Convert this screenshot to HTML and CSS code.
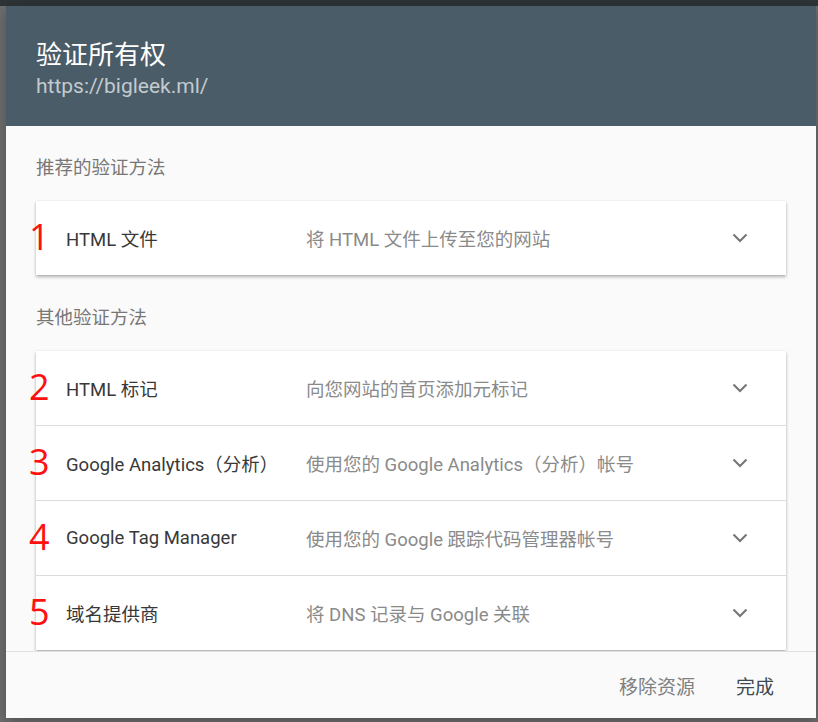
FILE: index.html
```html
<!DOCTYPE html>
<html lang="zh-CN">
<head>
<meta charset="utf-8">
<title>验证所有权</title>
<link rel="stylesheet" href="styles.css">
</head>
<body>
<div class="dialog">
  <header class="dialog-header">
    <h1 class="title">验证所有权</h1>
    <div class="url">https://bigleek.ml/</div>
  </header>
  <main class="dialog-body">
    <div class="section-label">推荐的验证方法</div>
    <div class="card">
      <div class="row">
        <span class="mark">1</span>
        <span class="name">HTML 文件</span>
        <span class="desc">将 HTML 文件上传至您的网站</span>
        <svg class="chev" width="16" height="10" viewBox="0 0 16 10"><path d="M1.5 1.5 L8 8 L14.5 1.5" fill="none" stroke="#757575" stroke-width="2"/></svg>
      </div>
    </div>
    <div class="section-label second">其他验证方法</div>
    <div class="card">
      <div class="row">
        <span class="mark">2</span>
        <span class="name">HTML 标记</span>
        <span class="desc">向您网站的首页添加元标记</span>
        <svg class="chev" width="16" height="10" viewBox="0 0 16 10"><path d="M1.5 1.5 L8 8 L14.5 1.5" fill="none" stroke="#757575" stroke-width="2"/></svg>
      </div>
      <div class="row">
        <span class="mark">3</span>
        <span class="name">Google Analytics（分析）</span>
        <span class="desc">使用您的 Google Analytics（分析）帐号</span>
        <svg class="chev" width="16" height="10" viewBox="0 0 16 10"><path d="M1.5 1.5 L8 8 L14.5 1.5" fill="none" stroke="#757575" stroke-width="2"/></svg>
      </div>
      <div class="row">
        <span class="mark">4</span>
        <span class="name">Google Tag Manager</span>
        <span class="desc">使用您的 Google 跟踪代码管理器帐号</span>
        <svg class="chev" width="16" height="10" viewBox="0 0 16 10"><path d="M1.5 1.5 L8 8 L14.5 1.5" fill="none" stroke="#757575" stroke-width="2"/></svg>
      </div>
      <div class="row">
        <span class="mark">5</span>
        <span class="name">域名提供商</span>
        <span class="desc">将 DNS 记录与 Google 关联</span>
        <svg class="chev" width="16" height="10" viewBox="0 0 16 10"><path d="M1.5 1.5 L8 8 L14.5 1.5" fill="none" stroke="#757575" stroke-width="2"/></svg>
      </div>
    </div>
  </main>
  <footer class="dialog-footer">
    <button class="btn btn-secondary">移除资源</button>
    <button class="btn btn-primary">完成</button>
  </footer>
</div>
</body>
</html>
```

FILE: styles.css
```css
* { box-sizing: border-box; }
html, body { height: 100%; }
body {
  margin: 0;
  background: linear-gradient(#2f3437 0, #2f3437 6px, #6f6f6f 6px, #6f6f6f 100%);
  font-family: Roboto, "Noto Sans CJK SC", sans-serif;
  overflow: hidden;
}
.dialog {
  margin: 6px 0 0 6px;
  width: 810px;
  height: 712px;
  background: #fafafa;
  display: flex;
  flex-direction: column;
  box-shadow: 0 4px 16px rgba(0,0,0,0.3);
}
.dialog-header {
  background: #4a5c67;
  height: 120px;
  flex: none;
  padding: 32px 30px 0 30px;
}
.title {
  margin: 0;
  font-weight: 400;
  font-size: 26px;
  line-height: 34px;
  color: #ffffff;
}
.url {
  font-size: 21px;
  line-height: 26px;
  color: #c2cbd0;
  margin-top: 1px;
}
.dialog-body {
  flex: 1;
  overflow: hidden;
  padding: 32px 30px 0 30px;
}
.section-label {
  font-size: 18.5px;
  line-height: 20px;
  color: #777777;
  margin-bottom: 23px;
}
.section-label.second { margin-top: 33px; }
.card {
  background: #fff;
  box-shadow: 0 2px 3px rgba(0,0,0,0.28), 0 0 2px rgba(0,0,0,0.08);
}
.row {
  position: relative;
  display: flex;
  align-items: center;
  height: 75px;
  padding: 0 38px 0 30px;
  border-bottom: 1px solid #dcdcdc;
  font-size: 18.5px;
}
.row:last-child { border-bottom: none; height: 74px; }
.mark {
  position: absolute;
  left: -7px;
  top: 50%;
  transform: translateY(-52%);
  font-family: "Open Sans", "Liberation Sans", sans-serif;
  font-size: 36px;
  line-height: 1;
  color: #ff1010;
}
.name {
  width: 240px;
  flex: none;
  color: #383838;
}
.desc {
  flex: 1;
  color: #8a8a8a;
}
.chev { flex: none; }
.dialog-footer {
  flex: none;
  height: 67px;
  border-top: 1px solid #e0e0e0;
  background: #fafafa;
  display: flex;
  justify-content: flex-end;
  align-items: center;
  padding: 0 34px 0 0;
  gap: 25px;
}
.btn {
  background: none;
  border: none;
  font-family: Roboto, "Noto Sans CJK SC", sans-serif;
  font-size: 19px;
  padding: 8px;
  cursor: pointer;
}
.btn-secondary { color: #808080; }
.btn-primary { color: #3c4a52; }
```
